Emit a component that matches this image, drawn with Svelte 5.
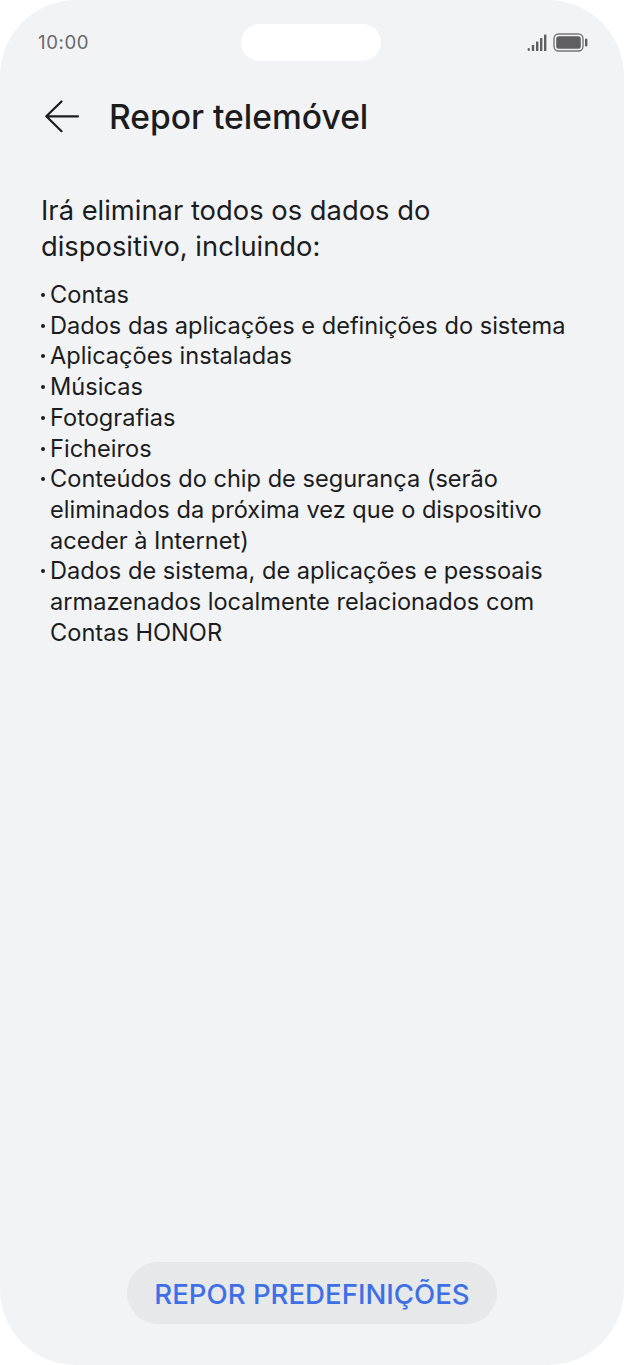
<script>
  const items = [
    'Contas',
    'Dados das aplicações e definições do sistema',
    'Aplicações instaladas',
    'Músicas',
    'Fotografias',
    'Ficheiros',
    'Conteúdos do chip de segurança (serão eliminados da próxima vez que o dispositivo aceder à Internet)',
    'Dados de sistema, de aplicações e pessoais armazenados localmente relacionados com Contas HONOR'
  ];
</script>

<div class="phone">
  <div class="status">
    <span class="time">10:00</span>
    <div class="island"></div>
    <div class="indicators">
      <svg width="20" height="18" viewBox="0 0 20 18" fill="#5f5f63">
        <rect x="0.6" y="14" width="2.2" height="3" rx="1" />
        <rect x="4.8" y="11" width="2.4" height="6" rx="0.6" />
        <rect x="9" y="7.5" width="2.4" height="9.5" rx="0.6" />
        <rect x="13" y="4" width="2.4" height="13" rx="0.6" />
        <rect x="17" y="0.5" width="2.4" height="16.5" rx="0.6" />
      </svg>
      <svg width="35" height="19" viewBox="0 0 35 19">
        <rect x="1" y="1" width="29" height="17" rx="4.5" fill="none" stroke="#77777b" stroke-width="1.4" />
        <rect x="3.2" y="3.2" width="24.6" height="12.6" rx="2.5" fill="#5f5f63" />
        <rect x="32" y="5.5" width="2.4" height="8" rx="1.2" fill="#5f5f63" />
      </svg>
    </div>
  </div>

  <header class="bar">
    <svg class="back" width="36" height="34" viewBox="0 0 36 34" fill="none" stroke="#1c1c1e" stroke-width="2.2" stroke-linecap="round" stroke-linejoin="round">
      <path d="M35 16.3H3.5M18.5 1.5L3.3 16.3L18.5 31.2" />
    </svg>
    <h1>Repor telemóvel</h1>
  </header>

  <main>
    <p class="intro">Irá eliminar todos os dados do dispositivo, incluindo:</p>
    <ul>
      {#each items as item}
        <li><span class="dot"></span>{item}</li>
      {/each}
    </ul>
  </main>

  <div class="foot">
    <button>REPOR PREDEFINIÇÕES</button>
  </div>
</div>

<style>
  :global(body) {
    margin: 0;
    background: #fff;
  }
  .phone {
    width: 624px;
    height: 1365px;
    box-sizing: border-box;
    background: #f1f3f5;
    border-radius: 76px;
    display: flex;
    flex-direction: column;
    font-family: Inter, "Noto Sans", sans-serif;
    color: #1c1c1e;
  }
  .status {
    height: 61px;
    padding: 24px 36px 0 38px;
    box-sizing: border-box;
    display: flex;
    justify-content: space-between;
    align-items: flex-start;
    position: relative;
  }
  .time {
    font-size: 18.6px;
    line-height: 37px;
    color: #68686c;
    letter-spacing: 0.6px;
  }
  .island {
    position: absolute;
    left: 241px;
    top: 24px;
    width: 140px;
    height: 37px;
    border-radius: 19px;
    background: #fff;
  }
  .indicators {
    display: flex;
    align-items: center;
    gap: 6px;
    height: 37px;
  }
  .bar {
    display: flex;
    align-items: center;
    gap: 30px;
    padding: 39px 0 0 43px;
    height: 34px;
  }
  h1 {
    margin: 0;
    font-size: 33.6px;
    font-weight: 500;
    line-height: 34px;
  }
  main {
    flex: 1;
    padding: 59px 40px 0 41px;
  }
  .intro {
    margin: 0 0 15px;
    font-size: 27.35px;
    line-height: 36px;
  }
  ul {
    list-style: none;
    margin: 0;
    padding: 0;
  }
  li {
    position: relative;
    padding-left: 9px;
    font-size: 23.6px;
    line-height: 30.7px;
  }
  .dot {
    position: absolute;
    left: 0;
    top: 13px;
    width: 4px;
    height: 4px;
    border-radius: 50%;
    background: #1c1c1e;
  }
  .foot {
    display: flex;
    justify-content: center;
    padding-bottom: 41px;
  }
  button {
    width: 370px;
    height: 62px;
    padding: 1px 0 0;
    border: 0;
    border-radius: 31px;
    background: #e6e8ea;
    color: #3f6fe6;
    font: 500 27.6px Inter, "Noto Sans", sans-serif;
  }
</style>
